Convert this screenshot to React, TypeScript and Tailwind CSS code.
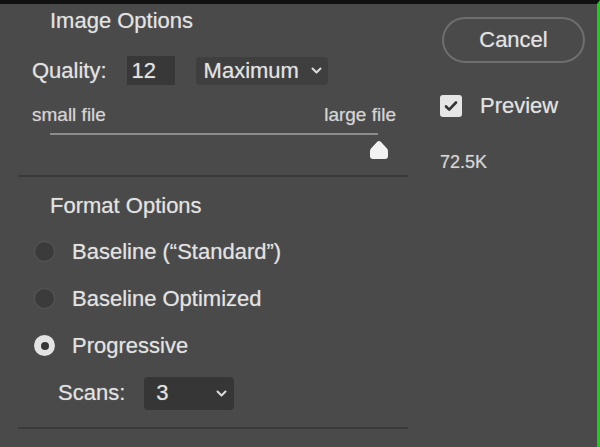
import React from "react";

function Chevron() {
  return (
    <svg width="11" height="7" viewBox="0 0 11 7" fill="none">
      <path d="M1.5 1.5l4 4 4-4" stroke="#dcdcdc" strokeWidth="2" strokeLinecap="round" strokeLinejoin="round" />
    </svg>
  );
}

function Radio({ checked, label }: { checked?: boolean; label: string }) {
  return (
    <div className="flex h-[22px] items-center">
      {checked ? (
        <div className="ml-[16px] flex h-[21px] w-[21px] items-center justify-center rounded-full bg-[#e4e4e4]">
          <div className="h-[8px] w-[8px] rounded-full bg-[#383838]"></div>
        </div>
      ) : (
        <div className="ml-[16px] h-[21px] w-[21px] rounded-full border border-[#5a5a5a] bg-[#3b3b3b]"></div>
      )}
      <span className="ml-[17px] text-[22px] leading-none text-[#e2e2e2]">{label}</span>
    </div>
  );
}

export default function App() {
  return (
    <div
      className="flex h-[447px] w-[600px] border-t-4 border-r-[3px] border-t-[#111111] border-r-[#2cc12c] bg-[#4a4a4a] text-[#e2e2e2] [text-shadow:0_0_1px_rgba(226,226,226,0.55)]"
      style={{ fontFamily: '"Liberation Sans", Arial, sans-serif' }}
    >
      <div className="ml-[18px] flex w-[390px] flex-col">
        <div className="mt-[5.5px] pl-[32px] text-[22px] leading-none">Image Options</div>

        <div className="mt-[24.5px] flex h-[29px] items-center pl-[14px]">
          <span className="text-[22px] leading-none">Quality:</span>
          <div className="ml-[20px] flex h-[29px] w-[48px] items-center bg-[#383838] pl-[5px] text-[22px] leading-none">
            12
          </div>
          <div className="ml-[21px] flex h-[28px] w-[132px] items-center justify-between rounded-sm bg-[#3f3f3f] pl-[8px] pr-[6px]">
            <span className="text-[22px] leading-none">Maximum</span>
            <Chevron />
          </div>
        </div>

        <div className="mt-[19.5px] flex justify-between pl-[14px] pr-[12px] text-[19px] leading-none text-[#d4d4d4]">
          <span>small file</span>
          <span>large file</span>
        </div>

        <div className="ml-[32px] mt-[9px] h-[2px] w-[328px] bg-[#8c8c8c]"></div>
        <div className="ml-[351px] mt-[5px] h-[20px] w-[20px]">
          <svg width="20" height="20" viewBox="0 0 20 20">
            <path d="M10 1 Q11 1 12 2 L18 8.5 Q19 9.5 19 11.5 L19 16 Q19 19 16 19 L4 19 Q1 19 1 16 L1 11.5 Q1 9.5 2 8.5 L8 2 Q9 1 10 1 Z" fill="#f2f2f2" />
          </svg>
        </div>

        <div className="mt-[15px] h-[2px] w-full bg-[#3a3a3a]"></div>

        <div className="mt-[18px] pl-[32px] text-[22px] leading-none">Format Options</div>

        <div className="mt-[24px] flex flex-col gap-[25px]">
          <Radio label={"Baseline (\u201CStandard\u201D)"} />
          <Radio label="Baseline Optimized" />
          <Radio checked label="Progressive" />
        </div>

        <div className="mt-[20px] flex h-[33px] items-center pl-[40px]">
          <span className="text-[22px] leading-none">Scans:</span>
          <div className="ml-[19px] flex h-[33px] w-[90px] items-center justify-between rounded-sm bg-[#363636] pl-[12px] pr-[7px]">
            <span className="text-[22px] leading-none">3</span>
            <Chevron />
          </div>
        </div>

        <div className="mt-[17px] h-[2px] w-full bg-[#3a3a3a]"></div>
      </div>

      <div className="ml-[32px] flex flex-col">
        <div className="ml-[2px] mt-[13px] flex h-[46px] w-[143px] items-center justify-center rounded-full border-2 border-[#6e6e6e] text-[22px] leading-none">
          Cancel
        </div>

        <div className="mt-[32px] flex h-[22px] items-center">
          <div className="flex h-[22px] w-[22px] items-center justify-center rounded-[3px] bg-[#e6e6e6]">
            <svg width="14" height="12" viewBox="0 0 14 12" fill="none">
              <path d="M2 6.5l3.2 3.2L12 2.5" stroke="#333333" strokeWidth="2.6" strokeLinecap="round" strokeLinejoin="round" />
            </svg>
          </div>
          <span className="ml-[18px] text-[22px] leading-none">Preview</span>
        </div>

        <div className="mt-[36px] text-[18px] leading-none text-[#d4d4d4]">72.5K</div>
      </div>
    </div>
  );
}
